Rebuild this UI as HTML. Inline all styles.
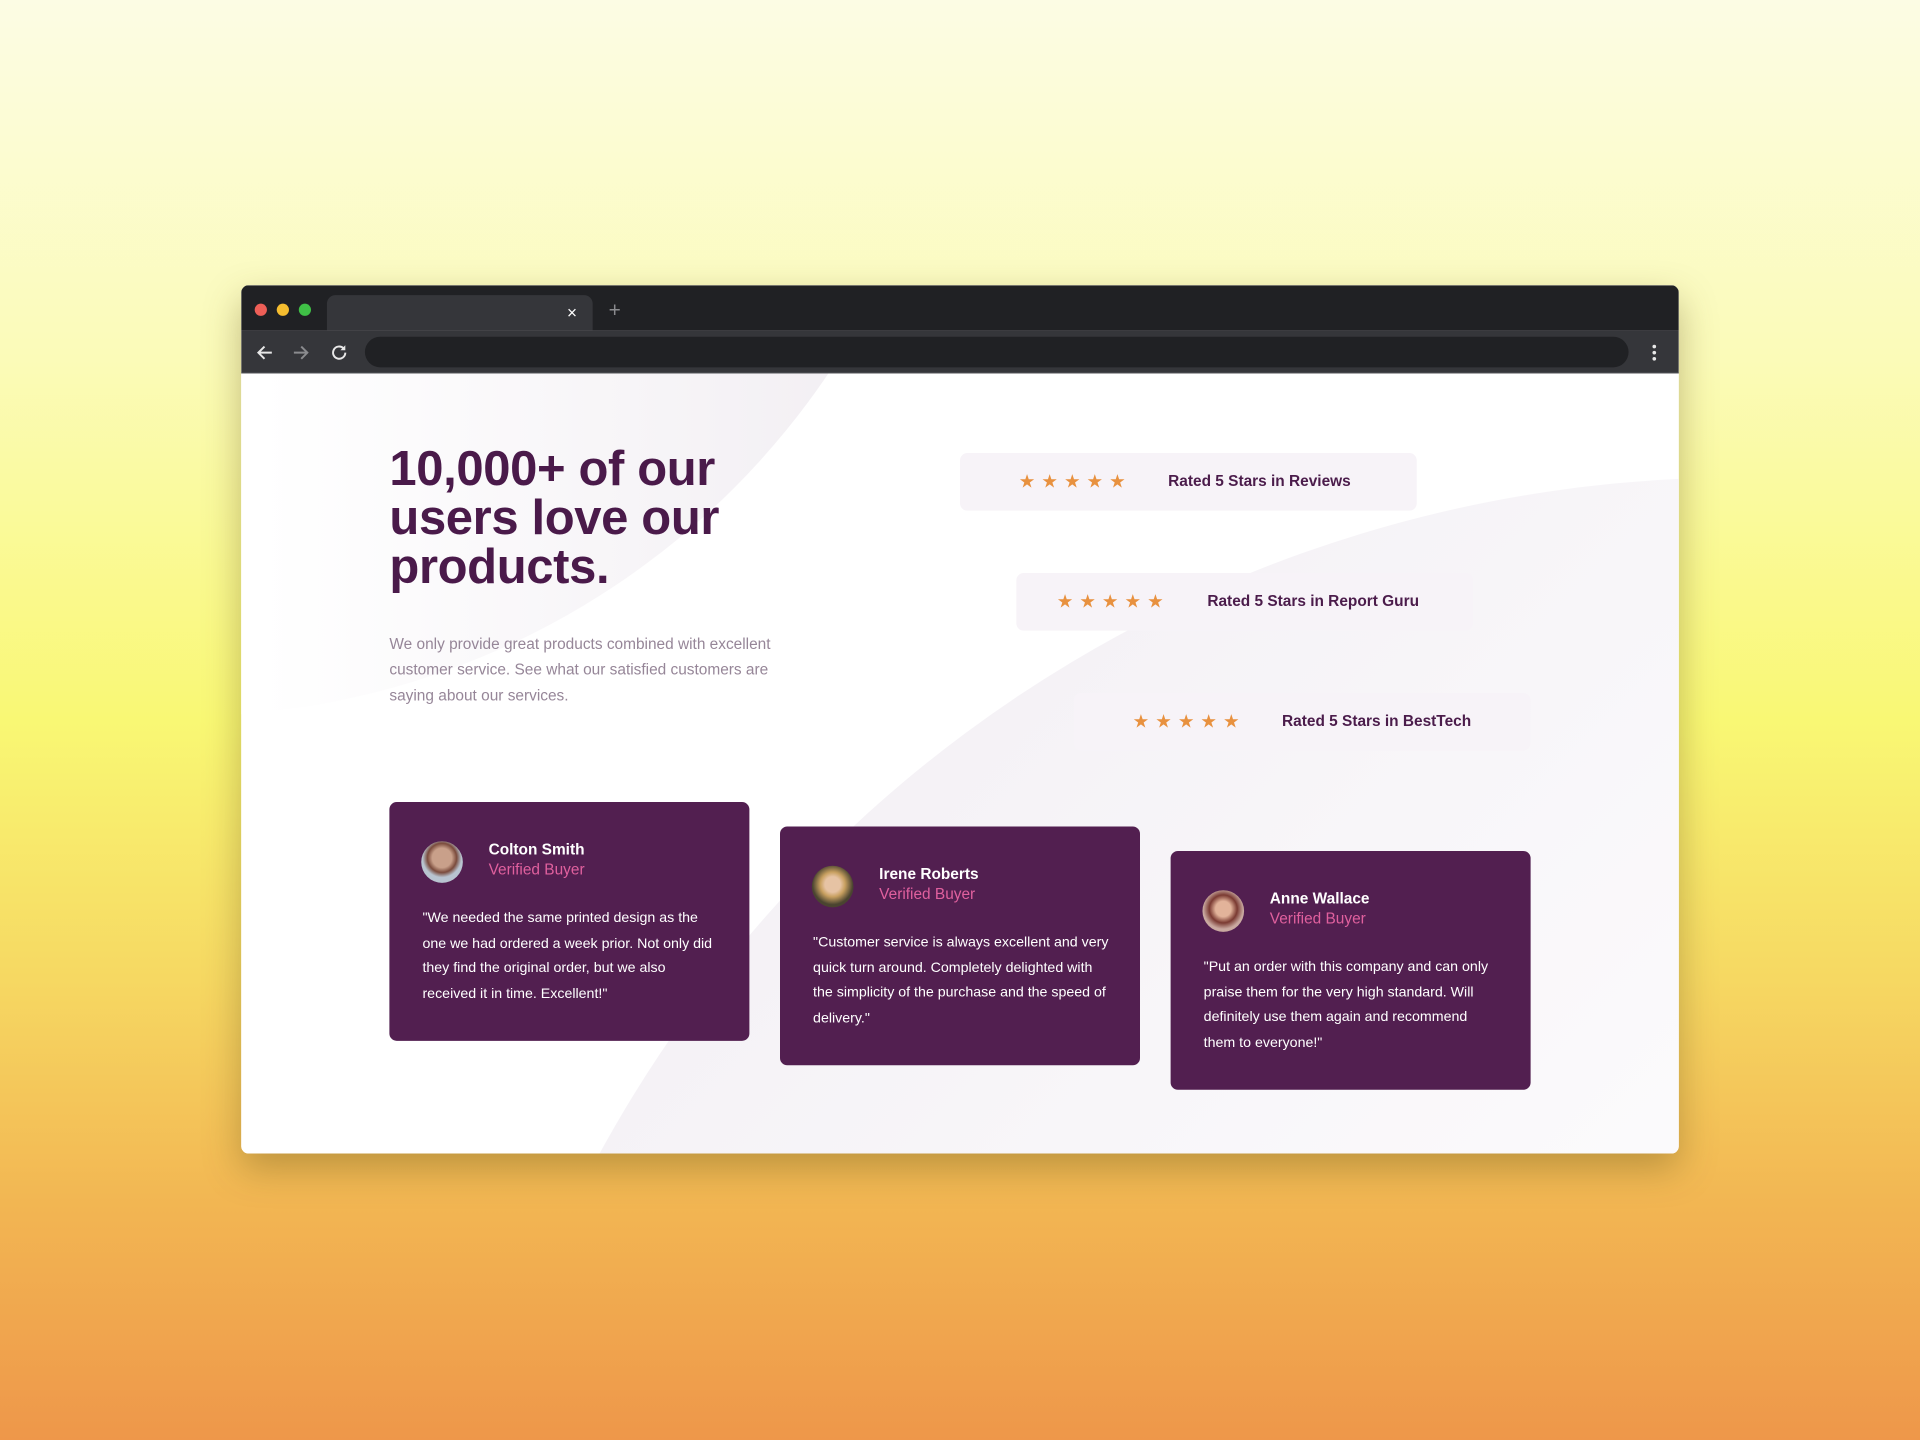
<!DOCTYPE html>
<html><head><meta charset="utf-8"><style>
*{margin:0;padding:0;box-sizing:border-box}
html,body{width:1920px;height:1440px;overflow:hidden}
body{background:linear-gradient(180deg,#fcfce4 0%,#fbfbb8 25%,#f9f874 50%,#f6d862 68%,#f2b552 84%,#ee974a 100%);font-family:"Liberation Sans",sans-serif}
#w{position:absolute;left:0;top:0;width:1568px;height:1176px;transform:scale(1.22449);transform-origin:0 0;overflow:hidden}
.br{position:absolute;left:197px;top:233px;width:1174px;height:709px;border-radius:6px;overflow:hidden;box-shadow:0 12px 30px rgba(90,70,20,.35);background:#fff}
.strip{position:absolute;left:0;top:0;width:100%;height:37px;background:#202124}
.dot{position:absolute;top:15px;width:10px;height:10px;border-radius:50%}
.tab{position:absolute;left:70px;top:8px;width:217px;height:29px;background:#35363a;border-radius:7px 7px 0 0}
.tb{position:absolute;left:0;top:37px;width:100%;height:35px;background:#35363a;border-bottom:1px solid #4a4b4f}
.addr{position:absolute;left:101px;top:5px;width:1032px;height:25px;background:#202124;border-radius:13px}
.ct{position:absolute;left:0;top:72px;width:1174px;height:637px;overflow:hidden;background:#fff}
.c1{position:absolute;left:-682px;top:-990px;width:1270px;height:1270px;border-radius:50%;background:linear-gradient(90deg,#fff 55%,#f0ecf1 100%)}
.c2{position:absolute;left:163px;top:85px;width:2120px;height:2120px;border-radius:50%;background:linear-gradient(135deg,#f0ecf2 0%,#f8f6f9 25%,#fff 50%)}
h1{position:absolute;left:121px;top:58px;font-size:40px;line-height:40px;color:#4a1a4a;font-weight:700;letter-spacing:-.3px;width:360px}
p.d{position:absolute;left:121px;top:211px;width:345px;font-size:12.6px;line-height:21px;color:#968698}
.rt{position:absolute;width:373px;height:47px;background:#f7f3f8;border-radius:6px}
.st{position:absolute;left:48px;top:16px;color:#e8913f;font-size:15px;letter-spacing:5px;line-height:16px}
.rl{position:absolute;left:170px;top:15px;font-size:12.6px;font-weight:700;color:#4b1c4b;line-height:16px}
.cd{position:absolute;width:294px;height:195px;background:#521f50;border-radius:6px;color:#fff}
.av{position:absolute;left:26px;top:32px;width:34px;height:34px;border-radius:50%}
.nm{position:absolute;left:81px;top:31px;font-size:12.6px;font-weight:700;line-height:16px}
.vb{position:absolute;left:81px;top:47px;font-size:12.6px;color:#e0609e;line-height:16px}
.q{position:absolute;left:27px;top:85px;width:242px;font-size:11.6px;line-height:20.6px}
</style></head><body><div id="w">
<div class="br">
 <div class="strip">
  <div class="dot" style="left:11px;background:#ee5f57"></div>
  <div class="dot" style="left:29px;background:#f5bd2f"></div>
  <div class="dot" style="left:47px;background:#3fc046"></div>
  <div class="tab"><span style="position:absolute;left:196px;top:6px;color:#fff;font-size:14px">×</span></div>
  <span style="position:absolute;left:300px;top:11px;color:#8a8b8e;font-size:17px">+</span>
 </div>
 <div class="tb">
  <svg style="position:absolute;left:11px;top:10px" width="16" height="16" viewBox="0 0 16 16"><path d="M14 8H3M8 3L3 8l5 5" stroke="#e8e8e8" stroke-width="1.6" fill="none"/></svg>
  <svg style="position:absolute;left:41px;top:10px" width="16" height="16" viewBox="0 0 16 16"><path d="M2 8h11M8 3l5 5-5 5" stroke="#8a8b8e" stroke-width="1.6" fill="none"/></svg>
  <svg style="position:absolute;left:72px;top:10px" width="16" height="16" viewBox="0 0 16 16"><path d="M13 8a5 5 0 1 1-1.5-3.6" stroke="#e8e8e8" stroke-width="1.6" fill="none"/><path d="M13 2v4H9z" fill="#e8e8e8"/></svg>
  <div class="addr"></div>
  <svg style="position:absolute;left:1150px;top:10px" width="8" height="16" viewBox="0 0 8 16"><circle cx="4" cy="3" r="1.5" fill="#e8e8e8"/><circle cx="4" cy="8" r="1.5" fill="#e8e8e8"/><circle cx="4" cy="13" r="1.5" fill="#e8e8e8"/></svg>
 </div>
 <div class="ct">
  <div class="c1"></div><div class="c2"></div>
  <h1>10,000+ of our users love our products.</h1>
  <p class="d">We only provide great products combined with excellent customer service. See what our satisfied customers are saying about our services.</p>
  <div class="rt" style="left:587px;top:65px"><span class="st">★★★★★</span><span class="rl">Rated 5 Stars in Reviews</span></div>
  <div class="rt" style="left:633px;top:163px"><span class="st" style="left:33px">★★★★★</span><span class="rl" style="left:156px">Rated 5 Stars in Report Guru</span></div>
  <div class="rt" style="left:680px;top:261px"><span class="st">★★★★★</span><span class="rl">Rated 5 Stars in BestTech</span></div>
  <div class="cd" style="left:121px;top:350px"><div class="av" style="background:radial-gradient(circle at 50% 40%,#c9a08a 0 30%,#7a4b3c 45%,#b8c4d0 60%)"></div><div class="nm">Colton Smith</div><div class="vb">Verified Buyer</div><div class="q">"We needed the same printed design as the one we had ordered a week prior. Not only did they find the original order, but we also received it in time. Excellent!"</div></div>
  <div class="cd" style="left:440px;top:370px"><div class="av" style="background:radial-gradient(circle at 50% 45%,#e6c3a4 0 25%,#c8a060 40%,#4a4430 65%)"></div><div class="nm">Irene Roberts</div><div class="vb">Verified Buyer</div><div class="q">"Customer service is always excellent and very quick turn around. Completely delighted with the simplicity of the purchase and the speed of delivery."</div></div>
  <div class="cd" style="left:759px;top:390px"><div class="av" style="background:radial-gradient(circle at 50% 45%,#e2b39a 0 25%,#7a3a32 45%,#c9a9a0 65%)"></div><div class="nm">Anne Wallace</div><div class="vb">Verified Buyer</div><div class="q">"Put an order with this company and can only praise them for the very high standard. Will definitely use them again and recommend them to everyone!"</div></div>
 </div>
</div>
</div></body></html>
